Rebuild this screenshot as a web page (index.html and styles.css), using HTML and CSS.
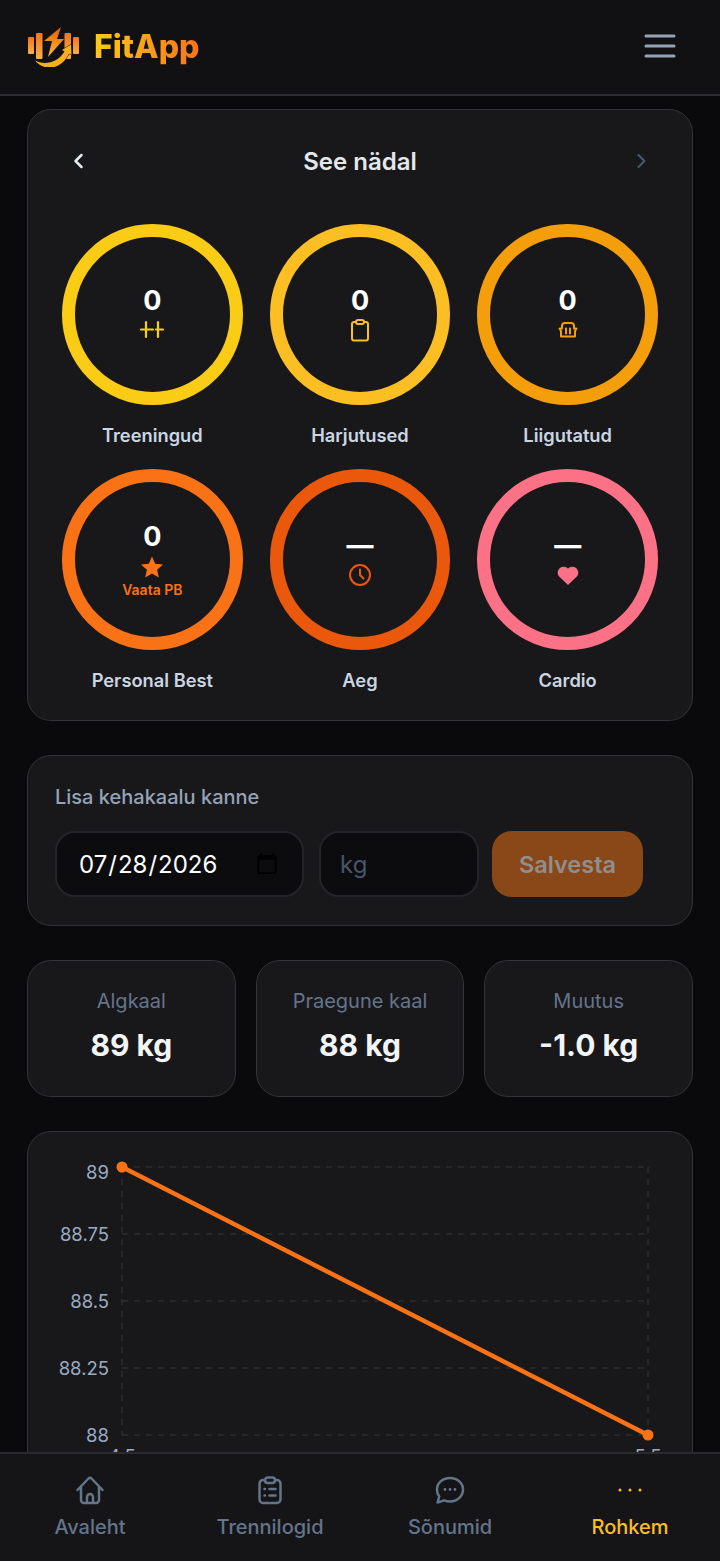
FILE: index.html
```html
<!DOCTYPE html>
<html lang="et">
<head>
<meta charset="utf-8">
<title>FitApp</title>
<link rel="stylesheet" href="styles.css">
</head>
<body>
<div class="app">
  <header class="topbar">
    <div class="brand">
      <svg class="logo" viewBox="0 0 54 42" width="54" height="42">
        <defs>
          <linearGradient id="lg1" x1="0" y1="0" x2="0" y2="1"><stop offset="0" stop-color="#f97316"/><stop offset="1" stop-color="#f8b04a"/></linearGradient>
          <linearGradient id="lg2" x1="0" y1="0" x2="0" y2="1"><stop offset="0" stop-color="#ea580c"/><stop offset="1" stop-color="#fbbf24"/></linearGradient>
        </defs>
        <rect x="1" y="12" width="6" height="17" rx="1" fill="url(#lg1)"/>
        <rect x="9" y="8" width="6.500" height="26" rx="1" fill="url(#lg1)"/>
        <rect x="37.500" y="8" width="6.500" height="26" rx="1" fill="url(#lg1)"/>
        <rect x="46" y="12" width="6" height="17" rx="1" fill="url(#lg1)"/>
        <path d="M34 2 L17 16 H25 L21 32 L37 14 H30 Z" fill="url(#lg2)"/>
        <path class="swoosh" d="M8 35.500 C16 40 30 39 37.500 26.500 L35 25 L44 19.500 L44.500 30 L42 28.500 C34 46 16 46 8 35.500 Z"/>
      </svg>
      <span class="brand-name">FitApp</span>
    </div>
    <svg class="menu" viewBox="0 0 32 26" width="32" height="26"><path d="M2 3h28M2 13h28M2 23h28" stroke="#94a3b8" stroke-width="3" stroke-linecap="round"/></svg>
  </header>

  <main class="content">
    <section class="card week">
      <div class="week-head">
        <svg class="chev" viewBox="0 0 12 18" width="12" height="18"><path d="M9.500 3 L3.500 9 L9.500 15" stroke="#e2e8f0" stroke-width="2.500" fill="none" stroke-linecap="round" stroke-linejoin="round"/></svg>
        <h2 class="week-title">See nädal</h2>
        <svg class="chev" viewBox="0 0 12 18" width="12" height="18"><path d="M2.500 3 L8.500 9 L2.500 15" stroke="#475569" stroke-width="2.200" fill="none" stroke-linecap="round" stroke-linejoin="round"/></svg>
      </div>
      <div class="rings">
        <div class="metric">
          <div class="ring c1">
            <span class="num">0</span>
            <svg class="ico" viewBox="0 0 24 24" width="24" height="24"><path d="M1 11.500H13M16 11.500H23M6 4v15M18 4v15" stroke="currentColor" stroke-width="2.200" stroke-linecap="round"/></svg>
          </div>
          <span class="metric-label">Treeningud</span>
        </div>
        <div class="metric">
          <div class="ring c2">
            <span class="num">0</span>
            <svg class="ico" viewBox="0 0 24 24" width="24" height="24"><path d="M8 4H6A2 2 0 0 0 4 6v14.500A2 2 0 0 0 6 22.500h12a2 2 0 0 0 2-2V6A2 2 0 0 0 18 4H16" stroke="currentColor" stroke-width="2" fill="none"/><rect x="8" y="2" width="8" height="4" rx="2" stroke="currentColor" stroke-width="2" fill="none"/></svg>
          </div>
          <span class="metric-label">Harjutused</span>
        </div>
        <div class="metric">
          <div class="ring c3">
            <span class="num">0</span>
            <svg class="ico" viewBox="0 0 24 24" width="24" height="24"><path d="M3.500 10.500H6V8Q6 5 9 5H15Q18 5 18 8V10.500H20.500L19 13V18.500H5V13ZM10 10.500V15.500M14 10.500V15.500" stroke="currentColor" stroke-width="2" fill="none" stroke-linecap="round" stroke-linejoin="round"/></svg>
          </div>
          <span class="metric-label">Liigutatud</span>
        </div>
        <div class="metric">
          <div class="ring c4 pb">
            <span class="num">0</span>
            <svg class="ico star" viewBox="0 0 24 24" width="24" height="24"><path d="M12 1.500l3.200 7.200 7.800.8-5.900 5.200 1.700 7.800L12 18.500l-6.800 4 1.700-7.800L1 9.500l7.800-.8z" fill="currentColor"/></svg>
            <span class="pb-link">Vaata PB</span>
          </div>
          <span class="metric-label">Personal Best</span>
        </div>
        <div class="metric">
          <div class="ring c5">
            <span class="num dash">—</span>
            <svg class="ico" viewBox="0 0 24 24" width="24" height="24"><circle cx="12" cy="12" r="10" stroke="currentColor" stroke-width="2" fill="none"/><path d="M12 6.500V12l3.500 3.500" stroke="currentColor" stroke-width="2" fill="none" stroke-linecap="round"/></svg>
          </div>
          <span class="metric-label">Aeg</span>
        </div>
        <div class="metric">
          <div class="ring c6">
            <span class="num dash">—</span>
            <svg class="ico" viewBox="0 0 24 24" width="24" height="24"><path d="M12 22 2.700 13A6 6 0 0 1 12 5.500 6 6 0 0 1 21.300 13z" fill="currentColor"/></svg>
          </div>
          <span class="metric-label">Cardio</span>
        </div>
      </div>
    </section>

    <section class="card entry">
      <h3 class="entry-title">Lisa kehakaalu kanne</h3>
      <form class="entry-row">
        <input class="field date" type="date" value="2026-07-28">
        <input class="field weight" type="text" placeholder="kg">
        <button class="save" type="button" disabled>Salvesta</button>
      </form>
    </section>

    <section class="stats">
      <div class="card stat"><span class="stat-label">Algkaal</span><span class="stat-value">89 kg</span></div>
      <div class="card stat"><span class="stat-label">Praegune kaal</span><span class="stat-value">88 kg</span></div>
      <div class="card stat"><span class="stat-label">Muutus</span><span class="stat-value">-1.0 kg</span></div>
    </section>

    <section class="card chart">
      <svg class="chart-svg" viewBox="0 0 664 340" width="664" height="340">
        <g class="grid">
          <path d="M94 35H620M94 102H620M94 169H620M94 236H620M94 303H620M94 35V303M620 35V303"/>
        </g>
        <g class="axis">
          <text x="81" y="47" text-anchor="end">89</text>
          <text x="81" y="109" text-anchor="end">88.75</text>
          <text x="81" y="176" text-anchor="end">88.5</text>
          <text x="81" y="243" text-anchor="end">88.25</text>
          <text x="81" y="310" text-anchor="end">88</text>
          <text x="94" y="331" text-anchor="middle">4.5</text>
          <text x="620" y="331" text-anchor="middle">5.5</text>
        </g>
        <path class="line" d="M94 35L620 303"/>
        <circle class="dot" cx="94" cy="35" r="5.500"/>
        <circle class="dot" cx="620" cy="303" r="5.500"/>
      </svg>
    </section>
  </main>

  <nav class="tabs">
    <a class="tab">
      <svg viewBox="0 0 30 30" width="30" height="30"><path d="M2.500 15 13.500 3.500a2 2 0 0 1 3 0L27.500 15M6 11.500V25a3 3 0 0 0 3 3h12a3 3 0 0 0 3-3V11.500M12 28v-6a3 3 0 0 1 6 0v6" stroke="currentColor" stroke-width="2.500" fill="none" stroke-linecap="round" stroke-linejoin="round"/></svg>
      <span>Avaleht</span>
    </a>
    <a class="tab">
      <svg viewBox="0 0 30 30" width="30" height="30"><path d="M10 5H8a3.500 3.500 0 0 0-3.500 3.500v16A3.500 3.500 0 0 0 8 28h14a3.500 3.500 0 0 0 3.500-3.500v-16A3.500 3.500 0 0 0 22 5h-2" stroke="currentColor" stroke-width="2.500" fill="none"/><rect x="10" y="2.500" width="10" height="5.500" rx="2.700" stroke="currentColor" stroke-width="2.500" fill="none"/><path d="M14.500 14h6M14.500 20.500h6M9.500 14h.5M9.500 20.500h.5" stroke="currentColor" stroke-width="2.500" stroke-linecap="round"/></svg>
      <span>Trennilogid</span>
    </a>
    <a class="tab">
      <svg viewBox="0 0 30 30" width="30" height="30"><path d="M15 3c7.500 0 13 5 13 11.500S22.500 26.500 15 26.500c-2 0-4-.4-5.600-1.100L2.500 27.500l1.800-6A11 11 0 0 1 2 14.500C2 8 7.500 3 15 3z" stroke="currentColor" stroke-width="2.500" fill="none" stroke-linejoin="round"/><circle cx="10" cy="14.500" r="1.400" fill="currentColor"/><circle cx="15" cy="14.500" r="1.400" fill="currentColor"/><circle cx="20" cy="14.500" r="1.400" fill="currentColor"/></svg>
      <span>Sõnumid</span>
    </a>
    <a class="tab active">
      <svg viewBox="0 0 30 30" width="30" height="30"><circle cx="5" cy="15" r="1.500" fill="currentColor"/><circle cx="15" cy="15" r="1.500" fill="currentColor"/><circle cx="25" cy="15" r="1.500" fill="currentColor"/></svg>
      <span>Rohkem</span>
    </a>
  </nav>
</div>
</body>
</html>
```

FILE: styles.css
```css
* { box-sizing: border-box; }
html, body { margin: 0; height: 100%; }
body { background: #0a0a0c; color: #fff; font-family: Inter, "Liberation Sans", sans-serif; }
.app { display: flex; flex-direction: column; height: 1561px; overflow: hidden; }

.topbar { flex: 0 0 96px; display: flex; align-items: center; justify-content: space-between; padding: 0 44px 2px 27px; background: #111113; border-bottom: 2px solid #2c2c30; }
.brand { display: flex; align-items: center; gap: 13px; }
.logo { display: block; }
.swoosh { fill: #f5b01e; stroke: #111113; stroke-width: 1; paint-order: stroke; }
.brand-name { font-size: 32px; font-weight: 800; background: linear-gradient(90deg, #facc15, #f97316); -webkit-background-clip: text; background-clip: text; color: transparent; }

.content { flex: 1; min-height: 0; overflow: hidden; padding: 13px 27px 0; display: flex; flex-direction: column; gap: 34px; }
.card { background: #18181b; border: 1px solid #333338; }

.week { flex: none; height: 612px; border-radius: 24px; padding: 28px 34px 0; }
.week-head { display: flex; align-items: center; justify-content: space-between; height: 46px; padding: 0 10px; }
.week-title { margin: 0; font-size: 24px; font-weight: 600; color: #e5e7eb; }
.chev { display: block; }
.rings { display: grid; grid-template-columns: repeat(3, 1fr); column-gap: 27px; row-gap: 0; margin-top: 40px; }
.metric { display: flex; flex-direction: column; align-items: center; height: 245px; }
.ring { width: 100%; aspect-ratio: 1; border-radius: 50%; border: 13px solid currentColor; display: flex; flex-direction: column; align-items: center; justify-content: center; padding-bottom: 1px; }
.c1 { color: #facc15; }
.c2 { color: #fbbf24; }
.c3 { color: #f59e0b; }
.c4 { color: #f97316; }
.c5 { color: #ea580c; }
.c6 { color: #fb7185; }
.num { font-size: 27px; font-weight: 700; line-height: 32px; color: #fff; }
.ico { display: block; margin-top: 1px; }
.pb { padding-bottom: 0; }
.star { margin-top: 2px; }
.pb-link { font-size: 14px; font-weight: 600; line-height: 16px; margin-top: 3px; }
.metric-label { margin-top: 19px; font-size: 18.300px; font-weight: 600; line-height: 22px; color: #cbd5e1; }

.entry { flex: none; height: 171px; border-radius: 24px; padding: 28px 27px; }
.entry-title { margin: 0; font-size: 20px; line-height: 26px; font-weight: 500; color: #94a3b8; }
.entry-row { display: flex; align-items: center; margin-top: 21px; }
.field { height: 66px; background: #0c0c0e; border: 2px solid #242428; border-radius: 20px; color: #fff; font-family: Inter, sans-serif; font-size: 24px; padding: 0 21px; outline: none; }
.field::placeholder { color: #475569; }
.date { width: 249px; flex: none; margin-right: 15px; color-scheme: light; }
.weight { width: 160px; flex: none; margin-right: 13px; padding: 0 19px; }
.save { width: 151px; height: 66px; flex: none; border: 0; border-radius: 20px; background: #8a4819; color: #8f8f8f; font-family: Inter, sans-serif; font-size: 23.500px; font-weight: 600; }

.stats { flex: none; display: grid; grid-template-columns: repeat(3, 1fr); gap: 20px; }
.stat { height: 137px; border-radius: 24px; display: flex; flex-direction: column; align-items: center; padding-top: 27px; }
.stat-label { font-size: 20px; line-height: 26px; color: #64748b; }
.stat-value { font-size: 30px; font-weight: 700; line-height: 40px; margin-top: 11px; color: #f3f4f6; }

.chart { flex: none; height: 360px; border-radius: 24px; }
.chart-svg { display: block; }
.grid path { stroke: #2c2c31; stroke-width: 1.500; stroke-dasharray: 6 6; fill: none; }
.axis text { font-family: Inter, sans-serif; font-size: 18.500px; fill: #9aabc2; }
.line { stroke: #f97316; stroke-width: 4.500; fill: none; }
.dot { fill: #f97316; }

.tabs { flex: 0 0 109px; display: grid; grid-template-columns: repeat(4, 1fr); background: #151517; border-top: 2px solid #2a2a2e; }
.tab { display: flex; flex-direction: column; align-items: center; padding-top: 21px; color: #64748b; }
.tab svg { display: block; }
.tab span { margin-top: 9px; font-size: 20px; line-height: 26px; font-weight: 500; }
.tab.active { color: #fbbf24; }
```
